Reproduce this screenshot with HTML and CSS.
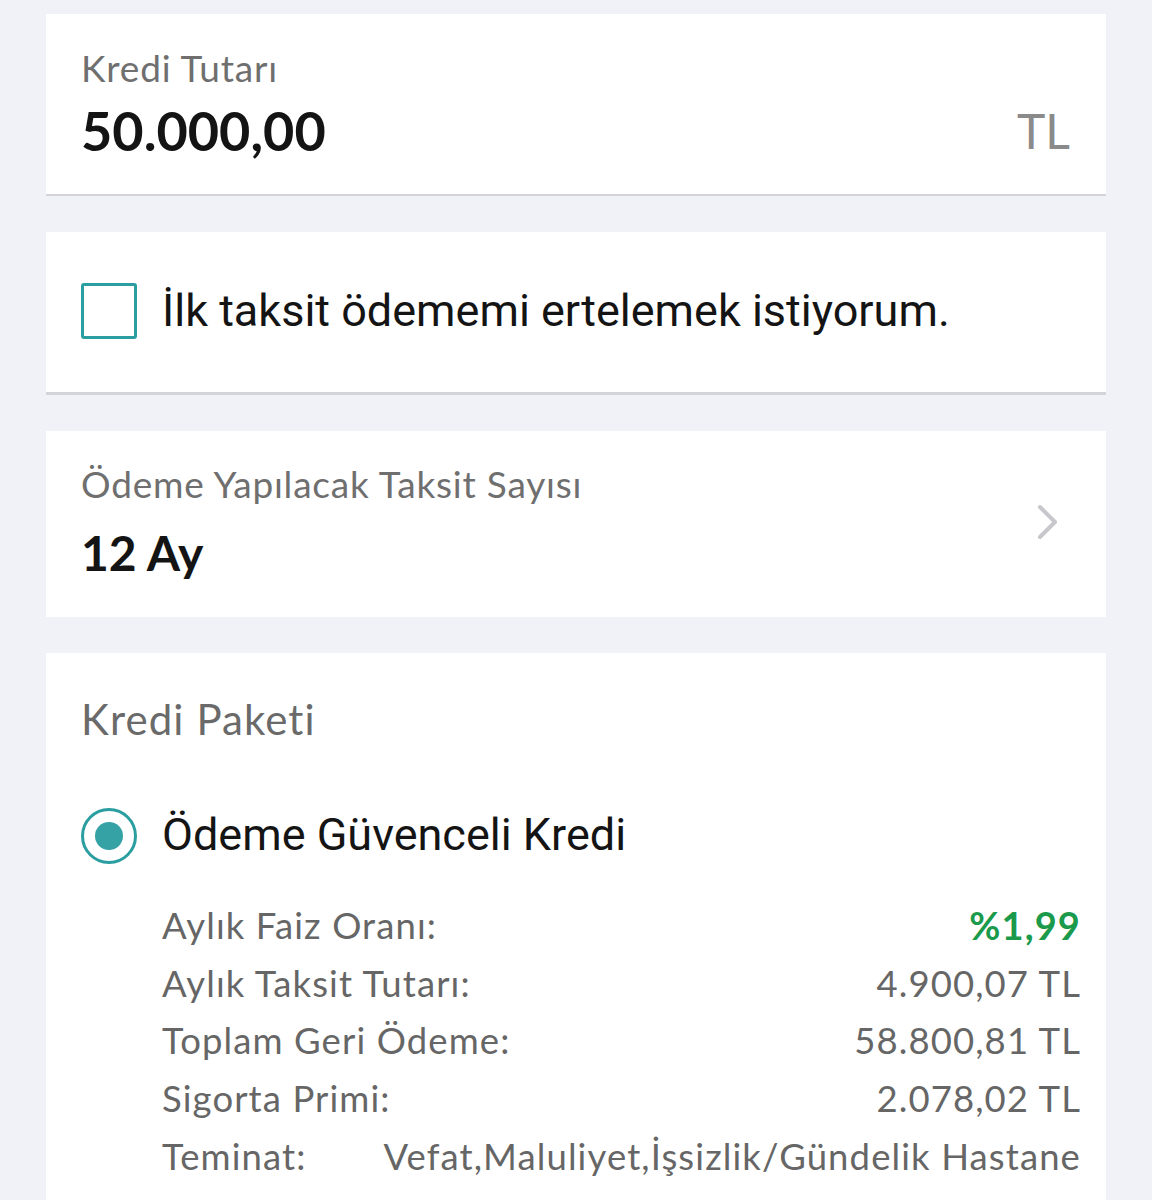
FILE: index.html
```html
<!DOCTYPE html>
<html lang="tr">
<head>
<meta charset="utf-8">
<link rel="stylesheet" href="styles.css">
</head>
<body>
<div class="page">
  <section class="card amount">
    <div class="amount-text">
      <div class="label">Kredi Tutarı</div>
      <div class="value big">50.000,00</div>
    </div>
    <div class="currency">TL</div>
  </section>

  <section class="card defer">
    <span class="checkbox"></span>
    <span class="defer-text">İlk taksit ödememi ertelemek istiyorum.</span>
  </section>

  <section class="card term">
    <div class="term-text">
      <div class="label">Ödeme Yapılacak Taksit Sayısı</div>
      <div class="value months">12 Ay</div>
    </div>
    <svg class="chevron" width="24" height="38" viewBox="0 0 24 38"><path d="M4 4 L19 19 L4 34" fill="none" stroke="#c8c8cc" stroke-width="4" stroke-linecap="round" stroke-linejoin="round"/></svg>
  </section>

  <section class="card package">
    <div class="pkg-title">Kredi Paketi</div>
    <div class="option">
      <span class="radio"><span class="dot"></span></span>
      <span class="option-text">Ödeme Güvenceli Kredi</span>
    </div>
    <div class="details">
      <div class="row"><span>Aylık Faiz Oranı:</span><span class="rate">%1,99</span></div>
      <div class="row"><span>Aylık Taksit Tutarı:</span><span>4.900,07 TL</span></div>
      <div class="row"><span>Toplam Geri Ödeme:</span><span>58.800,81 TL</span></div>
      <div class="row"><span>Sigorta Primi:</span><span>2.078,02 TL</span></div>
      <div class="row"><span>Teminat:</span><span>Vefat,Maluliyet,İşsizlik/Gündelik Hastane</span></div>
    </div>
  </section>
</div>
</body>
</html>
```

FILE: styles.css
```css
* { box-sizing: border-box; }
html, body { margin: 0; padding: 0; }
body {
  background: #f1f2f7;
  font-family: Lato, "Open Sans", sans-serif;
  height: 1200px;
  overflow: hidden;
}
.page {
  display: flex;
  flex-direction: column;
  gap: 36px;
  padding: 14px 46px 0 46px;
}
.card {
  background: #ffffff;
}
.label {
  font-size: 37px;
  letter-spacing: 0.8px;
  color: #6f6f6f;
  line-height: 44px;
}
.value {
  color: #141414;
  font-weight: 700;
}
.amount {
  height: 182px;
  border-bottom: 2px solid #d3d3d8;
  display: flex;
  justify-content: space-between;
  align-items: flex-start;
  padding: 32px 36px 0 35px;
}
.big {
  font-size: 54px;
  line-height: 64px;
  margin-top: 9px;
}
.currency {
  font-size: 48px;
  color: #8a8a8a;
  margin-top: 56px;
  line-height: 58px;
}
.defer {
  height: 163px;
  border-bottom: 3px solid #d3d3d8;
  display: flex;
  align-items: center;
  padding: 0 35px 3px 35px;
  gap: 25px;
}
.checkbox {
  width: 56px;
  height: 56px;
  border: 3px solid #2a9ea0;
  border-radius: 3px;
  flex: none;
}
.defer-text {
  font-family: Roboto, "Liberation Sans", sans-serif;
  font-size: 45px;
  color: #141414;
}
.term {
  height: 186px;
  display: flex;
  align-items: flex-start;
  justify-content: space-between;
  padding: 31px 46px 0 35px;
}
.months {
  font-size: 48px;
  line-height: 56px;
  margin-top: 19px;
}
.chevron {
  margin-top: 41px;
}
.package {
  padding: 41px 25px 40px 35px;
}
.pkg-title {
  font-size: 42px;
  letter-spacing: 1.1px;
  color: #6a6a6a;
  line-height: 50px;
}
.option {
  display: flex;
  align-items: center;
  gap: 25px;
  margin-top: 64px;
  height: 56px;
}
.radio {
  width: 56px;
  height: 56px;
  border: 3px solid #2a9ea0;
  border-radius: 50%;
  display: flex;
  align-items: center;
  justify-content: center;
  flex: none;
}
.dot {
  width: 28px;
  height: 28px;
  border-radius: 50%;
  background: #35a2a6;
}
.option-text {
  font-family: Roboto, "Liberation Sans", sans-serif;
  font-size: 45px;
  color: #141414;
  margin-top: -4px;
}
.details {
  margin-top: 33px;
  padding-left: 81px;
  display: flex;
  flex-direction: column;
}
.row {
  display: flex;
  justify-content: space-between;
  font-size: 36.5px;
  letter-spacing: 1.1px;
  line-height: 57.7px;
  color: #666666;
}
.rate {
  color: #1b9a4c;
  font-weight: 700;
  font-size: 38px;
}
```
